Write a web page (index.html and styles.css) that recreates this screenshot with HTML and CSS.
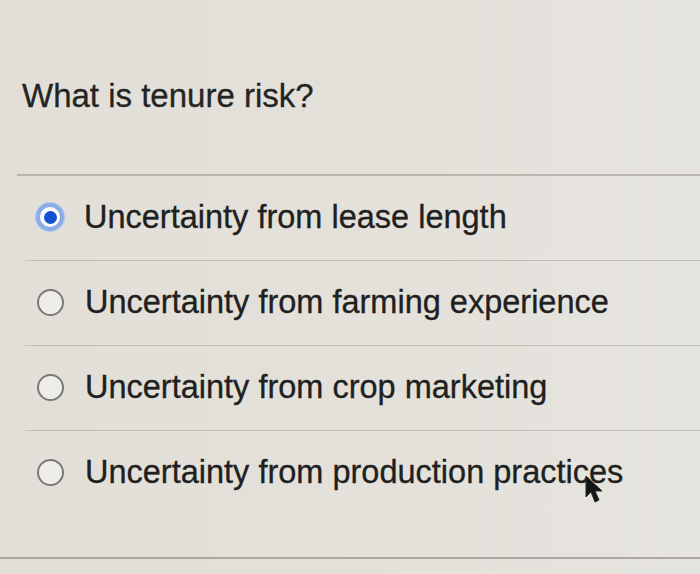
FILE: index.html
```html
<!DOCTYPE html>
<html>
<head>
<meta charset="utf-8">
<link rel="stylesheet" href="styles.css">
</head>
<body>
<div class="page">
  <div class="question">
    <h1 class="title">What is tenure risk?</h1>
  </div>
  <ul class="options">
    <li class="option"><span class="radio selected"><span class="dot"></span></span><span class="label">Uncertainty from lease length</span></li>
    <li class="option"><span class="radio"></span><span class="label">Uncertainty from farming experience</span></li>
    <li class="option"><span class="radio"></span><span class="label">Uncertainty from crop marketing</span></li>
    <li class="option last"><span class="radio"></span><span class="label">Uncertainty from production practi<span class="cursor-anchor">c<svg class="cursor" width="22" height="30" viewBox="0 0 22 30"><path d="M2 1 L2 22 L7 17 L11 27 L15 25 L11 16 L18 16 Z" fill="#151515" stroke="#2a2a2a" stroke-width="1" stroke-linejoin="round"/></svg></span>es</span></li>
  </ul>
  <div class="footer"></div>
</div>
</body>
</html>
```
FILE: styles.css
```css
html, body {
  margin: 0;
  padding: 0;
}
body {
  width: 700px;
  height: 574px;
  overflow: hidden;
  background: linear-gradient(90deg, #e1dfd7 0%, #e3e1da 60%, #e6e4de 100%);
  font-family: "Liberation Sans", Arial, sans-serif;
  color: #262626;
}
.page {
  display: flex;
  flex-direction: column;
}
.question {
  margin-left: 17px;
  padding: 76px 0 0 5px;
  height: 98px;
  border-bottom: 2px solid #b8b6ae;
}
.title {
  margin: 0;
  font-size: 33px;
  line-height: 40px;
  font-weight: normal;
  color: #242424;
  -webkit-text-stroke: 0.3px #242424;
}
.options {
  list-style: none;
  margin: 0 0 0 25px;
  padding: 0;
}
.option {
  display: flex;
  align-items: center;
  padding: 21px 0 23px 12px;
  height: 40px;
  border-bottom: 1px solid #c0beb6;
}
.option.last {
  border-bottom: none;
}
.radio {
  box-sizing: border-box;
  width: 27px;
  height: 27px;
  border-radius: 50%;
  border: 2px solid #7a7976;
  background: #eeede8;
  flex: none;
  margin-right: 21px;
  display: flex;
  align-items: center;
  justify-content: center;
}
.radio.selected {
  width: 28px;
  height: 28px;
  margin-left: -1px;
  margin-right: 20px;
  border: 4px solid #8aade9;
  background: #ffffff;
  box-shadow: 0 0 0 1px #b3c8ee;
}
.dot {
  width: 13px;
  height: 13px;
  border-radius: 50%;
  background: #1450d2;
}
.label {
  font-size: 32.5px;
  line-height: 40px;
  white-space: nowrap;
  color: #202020;
  -webkit-text-stroke: 0.3px #202020;
}
.cursor-anchor {
  position: relative;
}
.cursor {
  position: absolute;
  left: 11px;
  top: 21px;
}
.footer {
  height: 42px;
  border-bottom: 2px solid #a9a7a0;
}
```
